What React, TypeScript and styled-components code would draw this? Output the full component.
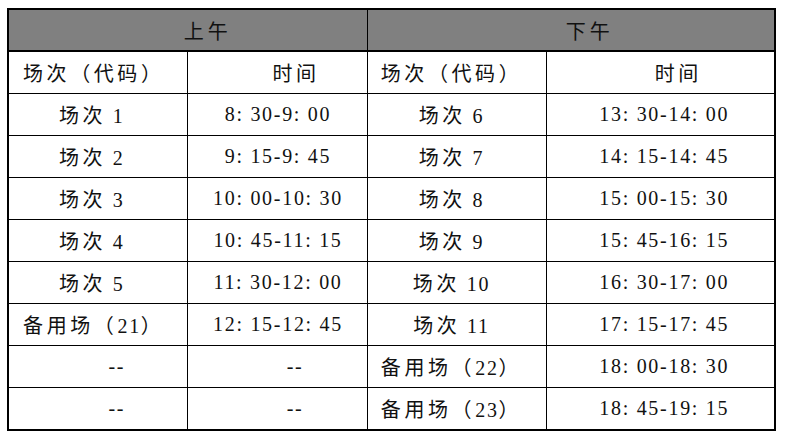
import React from "react";
import styled, { createGlobalStyle } from "styled-components";

const GlobalStyle = createGlobalStyle`
  body {
    margin: 0;
    background: #fff;
  }
`;

const Page = styled.div`
  padding: 8px 0 0 7px;
`;

const Table = styled.table`
  border-collapse: collapse;
  table-layout: fixed;
  width: 769px;
  border: 2px solid #000;
  font-family: "Liberation Serif", "Noto Sans CJK SC", serif;
  font-size: 20px;
  color: #111;
`;

const HeadCell = styled.th<{ $shift?: number }>`
  background: #808080;
  height: 40px;
  border: 1px solid #000;
  border-bottom: 2px solid #000;
  font-weight: normal;
  letter-spacing: 4px;
  text-align: center;
  padding: 0 0 0 ${(p) => (p.$shift ?? 0) * 2}px;
`;

const Cell = styled.td<{ $shift?: number }>`
  height: 41px;
  border: 1px solid #000;
  text-align: center;
  letter-spacing: 1.7px;
  white-space: pre;
  padding: ${(p) =>
    (p.$shift ?? 0) >= 0
      ? `0 0 0 ${(p.$shift ?? 0) * 2}px`
      : `0 ${-(p.$shift ?? 0) * 2}px 0 0`};
`;

const Han = styled.span`
  letter-spacing: 3.6px;
`;

// wrap the chinese characters so they get the wider spacing
const label = (text: string) =>
  text.split(/([^\x00-\x7f]+)/).map((part, i) =>
    /[^\x00-\x7f]/.test(part) ? <Han key={i}>{part}</Han> : part
  );

interface Row {
  am: string;
  amTime: string;
  pm: string;
  pmTime: string;
}

const rows: Row[] = [
  { am: "场次 1", amTime: "8: 30-9: 00", pm: "场次 6", pmTime: "13: 30-14: 00" },
  { am: "场次 2", amTime: "9: 15-9: 45", pm: "场次 7", pmTime: "14: 15-14: 45" },
  { am: "场次 3", amTime: "10: 00-10: 30", pm: "场次 8", pmTime: "15: 00-15: 30" },
  { am: "场次 4", amTime: "10: 45-11: 15", pm: "场次 9", pmTime: "15: 45-16: 15" },
  { am: "场次 5", amTime: "11: 30-12: 00", pm: "场次 10", pmTime: "16: 30-17: 00" },
  { am: "备用场（21）", amTime: "12: 15-12: 45", pm: "场次 11", pmTime: "17: 15-17: 45" },
  { am: "--", amTime: "--", pm: "备用场（22）", pmTime: "18: 00-18: 30" },
  { am: "--", amTime: "--", pm: "备用场（23）", pmTime: "18: 45-19: 15" },
];

const App: React.FC = () => {
  return (
    <>
      <GlobalStyle />
      <Page>
        <Table>
          <colgroup>
            <col style={{ width: 179 }} />
            <col style={{ width: 180 }} />
            <col style={{ width: 179 }} />
            <col style={{ width: 229 }} />
          </colgroup>
          <thead>
            <tr>
              <HeadCell colSpan={2} $shift={20}>
                上午
              </HeadCell>
              <HeadCell colSpan={2} $shift={19}>
                下午
              </HeadCell>
            </tr>
          </thead>
          <tbody>
            <tr>
              <Cell $shift={-4}>{label("场次（代码）")}</Cell>
              <Cell $shift={19}>{label("时间")}</Cell>
              <Cell $shift={-5}>{label("场次（代码）")}</Cell>
              <Cell $shift={18}>{label("时间")}</Cell>
            </tr>
            {rows.map((row, i) => (
              <tr key={i}>
                <Cell
                  $shift={row.am === "--" ? 19 : row.am.startsWith("备") ? -4 : -6}
                >
                  {label(row.am)}
                </Cell>
                <Cell $shift={row.amTime === "--" ? 18 : 1}>{row.amTime}</Cell>
                <Cell $shift={-5}>{label(row.pm)}</Cell>
                <Cell $shift={4}>{row.pmTime}</Cell>
              </tr>
            ))}
          </tbody>
        </Table>
      </Page>
    </>
  );
};

export default App;
